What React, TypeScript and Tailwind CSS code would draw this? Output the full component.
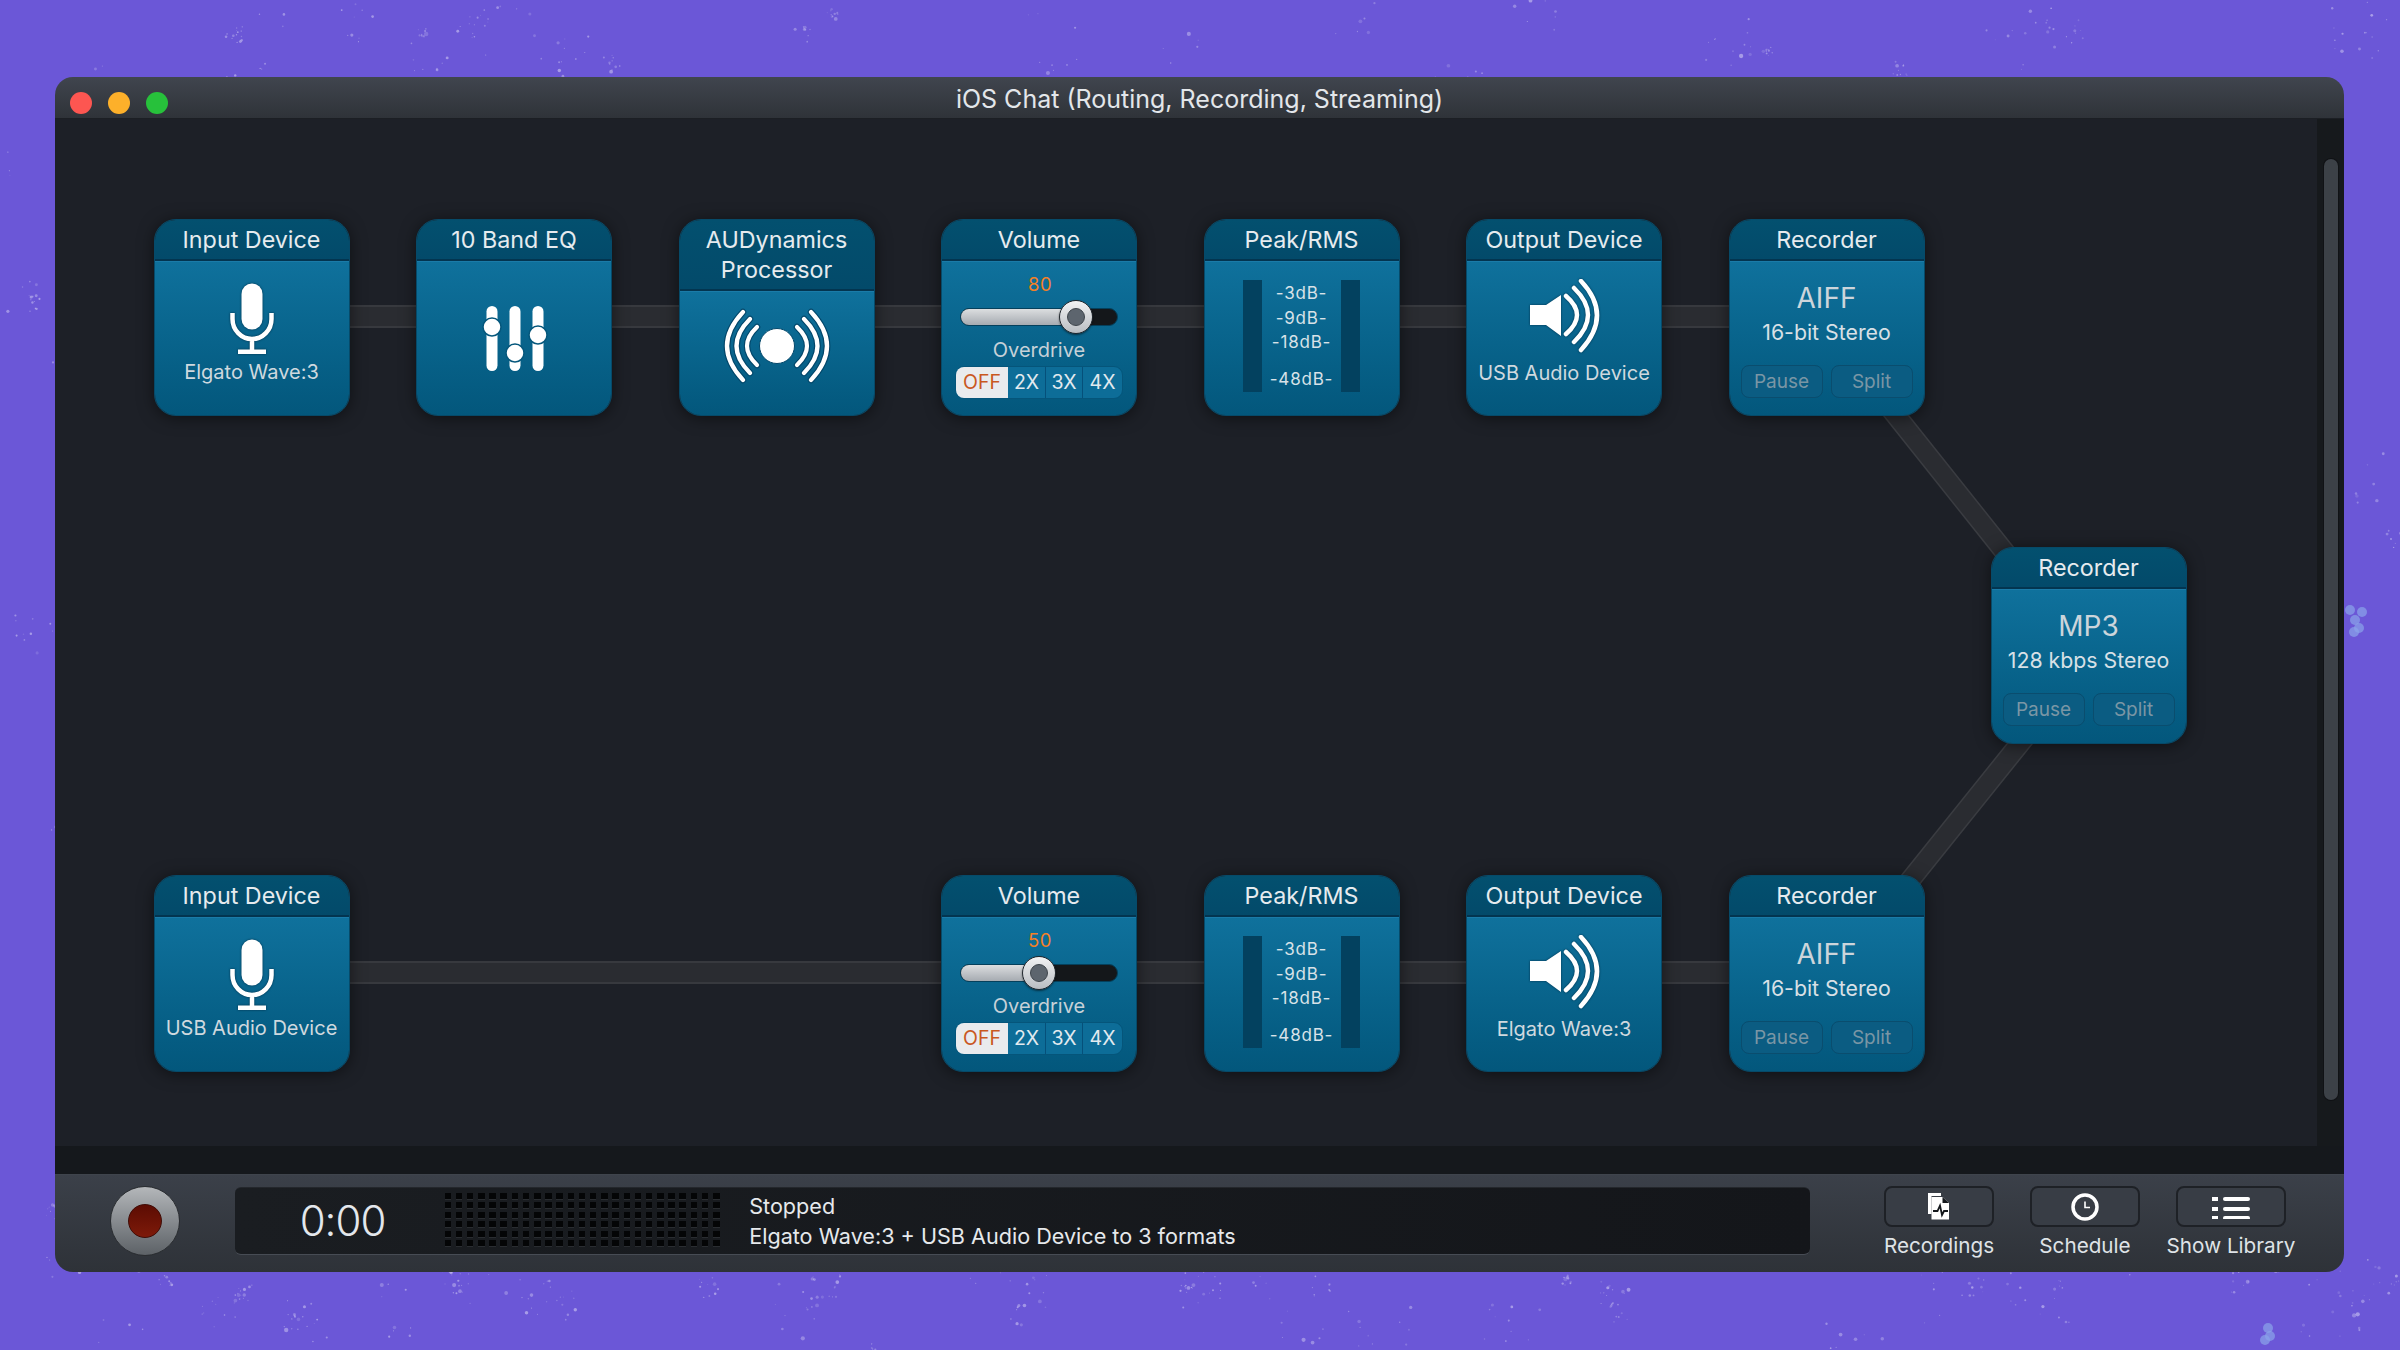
import type { ReactNode } from "react";

// backdrop speckle, seeded so every render gives the same picture
function makeSpeckle(clusters: number) {
  let seed = 48271;
  const next = () => {
    seed = (seed * 16807) % 2147483647;
    return seed / 2147483647;
  };
  const dots = [];
  for (let c = 0; c < clusters; c++) {
    const cx = next() * 2400;
    const cy = next() * 1350;
    const spread = 8 + next() * 60;
    const n = 2 + Math.floor(next() * 14);
    for (let i = 0; i < n; i++) {
      dots.push({
        x: cx + (next() - 0.5) * spread,
        y: cy + (next() - 0.5) * spread,
        r: 0.5 + next() * next() * 1.8,
        o: 0.12 + next() * 0.3,
      });
    }
  }
  return dots;
}

const speckle = makeSpeckle(520);

// the two pale blue blots at the right edge
const blots = [
  { x: 2355, y: 620 },
  { x: 2350, y: 610 },
  { x: 2359, y: 628 },
  { x: 2354, y: 632 },
  { x: 2362, y: 612 },
  { x: 2268, y: 1328 },
  { x: 2270, y: 1336 },
  { x: 2265, y: 1340 },
];

function Backdrop() {
  return (
    <svg className="absolute inset-0" width={2400} height={1350} viewBox="0 0 2400 1350">
      {speckle.map((d, i) => (
        <circle key={i} cx={d.x} cy={d.y} r={d.r} fill="#ffffff" opacity={d.o} />
      ))}
      {blots.map((b, i) => (
        <circle key={i} cx={b.x} cy={b.y} r={5} fill="#8aa4ea" opacity={0.7} />
      ))}
    </svg>
  );
}

function Node({ title, tall, children }: { title: ReactNode; tall?: boolean; children: ReactNode }) {
  return (
    <div className="relative z-10 flex h-[197px] w-[196px] shrink-0 flex-col overflow-hidden rounded-[22px] border border-[#064a69] shadow-[0_2px_16px_rgba(0,0,0,0.5)]">
      <div
        className={`flex shrink-0 items-center justify-center border-b-2 border-[#033550] bg-gradient-to-b from-[#03506f] to-[#034a6a] text-center text-[23.3px] leading-[30px] text-[#e6ebef] ${
          tall ? "h-[71px]" : "h-[41px]"
        }`}
      >
        <div>{title}</div>
      </div>
      <div className="flex flex-1 flex-col items-center border-t border-[#1a7ba8] bg-gradient-to-b from-[#0f719c] to-[#03577c]">{children}</div>
    </div>
  );
}

function Wire({ width }: { width: string }) {
  return <div className={`mt-[86px] h-[23px] shrink-0 border-y-2 border-[#37393e] bg-[#2a2c31] ${width}`} />;
}

function MicIcon() {
  return (
    <svg width={44} height={72} viewBox="0 0 44 72" className="drop-shadow-[0_0_1px_#02304a]">
      <rect x={11.5} y={0.5} width={21} height={46} rx={10.5} fill="#fff" />
      <path d="M2.5 30V36A19.5 20 0 0 0 41.5 36V30M22 56V68" fill="none" stroke="#fff" strokeWidth={4.5} />
      <rect x={8} y={66.5} width={28} height={4.5} fill="#fff" />
    </svg>
  );
}

function InputDevice({ name }: { name: string }) {
  return (
    <Node title="Input Device">
      <div className="mt-[21px]">
        <MicIcon />
      </div>
      <div className="mt-[5px] text-[20px] leading-[24px] whitespace-nowrap text-[#cfd9df]">{name}</div>
    </Node>
  );
}

function EqNode() {
  return (
    <Node title="10 Band EQ">
      <div className="flex flex-1 items-center pl-[2px]">
        <svg width={66} height={66} viewBox="0 0 66 66">
          {[
            { x: 10, y: 21 },
            { x: 33, y: 47 },
            { x: 56, y: 29 },
          ].map((b) => (
            <g key={b.x}>
              <rect x={b.x - 5.5} y={0} width={11} height={65} rx={5.5} fill="#fff" />
              <circle cx={b.x} cy={b.y} r={9} fill="#fff" stroke="#05577c" strokeWidth={1.5} />
            </g>
          ))}
        </svg>
      </div>
    </Node>
  );
}

function DynamicsNode() {
  const arcs = ["M-20-19Q-40 0-20 19", "M-27-27Q-54 0-27 27", "M-34-34Q-66 0-34 34", "M20-19Q40 0 20 19", "M27-27Q54 0 27 27", "M34-34Q66 0 34 34"];
  return (
    <Node
      tall
      title={
        <>
          AUDynamics
          <br />
          Processor
        </>
      }
    >
      <div className="mt-[16px]">
        <svg width={112} height={76} viewBox="-56 -38 112 76">
          {arcs.map((d) => (
            <path key={d} d={d} fill="none" stroke="#03476a" strokeWidth={6.5} strokeLinecap="round" />
          ))}
          {arcs.map((d) => (
            <path key={d} d={d} fill="none" stroke="#fff" strokeWidth={4.2} strokeLinecap="round" />
          ))}
          <circle r={17.5} fill="#fff" stroke="#03476a" strokeWidth={1} />
        </svg>
      </div>
    </Node>
  );
}

function VolumeNode({ value }: { value: number }) {
  const knob = 16.3 + value * 1.233;
  return (
    <Node title="Volume">
      <div className="mt-[11px] pl-[2px] text-[18.5px] leading-[22px] tracking-[0.5px] text-[#f58026]">{value}</div>
      <div className="relative mt-[13px] h-[18px] w-[158px] overflow-visible rounded-full border border-[#04405c] bg-[#14171a]">
        <div
          className="h-full rounded-l-full bg-gradient-to-b from-[#dcdee0] to-[#a6abb1]"
          style={{ width: knob }}
        />
        <div
          className="absolute top-[-9px] flex h-[34px] w-[34px] -translate-x-1/2 items-center justify-center rounded-full border border-[#20262c] bg-gradient-to-b from-[#f2f3f4] to-[#b9bdc2] shadow-[0_1px_2px_rgba(0,0,0,0.5)]"
          style={{ left: knob }}
        >
          <div className="h-[18px] w-[18px] rounded-full border border-[#3e454c] bg-[#5d656e]" />
        </div>
      </div>
      <div className="mt-[12px] text-[20px] leading-[24px] text-[#c6d1d8]">Overdrive</div>
      <div className="mt-[4px] flex h-[33px] w-[168px] overflow-hidden rounded-[9px] border border-[#05557a] bg-[#0d6d98] text-[19.5px] leading-[31px] text-[#e2eaef]">
        <div className="w-[52px] bg-[#e9ebed] text-center text-[#c9581f]">OFF</div>
        <div className="w-[38px] border-r border-[#05507a] text-center">2X</div>
        <div className="w-[37px] border-r border-[#05507a] text-center">3X</div>
        <div className="flex-1 text-center">4X</div>
      </div>
    </Node>
  );
}

function PeakNode() {
  return (
    <Node title="Peak/RMS">
      <div className="mt-[18px] flex h-[112px]">
        <div className="w-[19px] bg-[#03415f]" />
        <div className="flex w-[78.5px] flex-col items-center pt-[3px] text-[17px] leading-[20px] tracking-[0.8px] text-[#d8e2e8]">
          <div>-3dB-</div>
          <div className="mt-[5px]">-9dB-</div>
          <div className="mt-[4px]">-18dB-</div>
          <div className="mt-[17px]">-48dB-</div>
        </div>
        <div className="w-[19px] bg-[#03415f]" />
      </div>
    </Node>
  );
}

function OutputDevice({ name }: { name: string }) {
  return (
    <Node title="Output Device">
      <div className="mt-[17px] pl-[2px]">
        <svg width={70} height={74} viewBox="0 0 70 74" className="drop-shadow-[0_0_1px_#02304a]">
          <path d="M0 26H16L31 16V57L16 46H0Z" fill="#fff" />
          <path d="M36 17Q58 36 36 55M44 9Q72 36 44 63M51 2Q83 36 51 71" fill="none" stroke="#fff" strokeWidth={4.5} strokeLinecap="round" />
        </svg>
      </div>
      <div className="mt-[8px] text-[20px] leading-[24px] whitespace-nowrap text-[#cfd9df]">{name}</div>
    </Node>
  );
}

function RecorderNode({ format, detail }: { format: string; detail: string }) {
  return (
    <Node title="Recorder">
      <div className="mt-[19px] text-[28px] leading-[34px] text-[#ccd5db]">{format}</div>
      <div className="mt-[5px] text-[21.3px] leading-[24px] whitespace-nowrap text-[#d8e0e6]">{detail}</div>
      <div className="mt-[21px] flex gap-[8px]">
        <div className="h-[33px] w-[82px] rounded-[8px] border border-[#0a4d6e] bg-[#0b5c82] text-center text-[19px] leading-[31px] text-[#7a96a5]">Pause</div>
        <div className="h-[33px] w-[82px] rounded-[8px] border border-[#0a4d6e] bg-[#0b5c82] text-center text-[19px] leading-[31px] text-[#7a96a5]">Split</div>
      </div>
    </Node>
  );
}

function DiagonalWires() {
  const edges = [
    { fill: "1813,277 1838,277 1979,454 1954,454", a: "M1813 277L1954 454", b: "M1838 277L1979 454" },
    { fill: "1968,605 1993,605 1855,777 1830,777", a: "M1968 605L1830 777", b: "M1993 605L1855 777" },
  ];
  return (
    <svg className="absolute inset-0" width={2261} height={1027} viewBox="0 0 2261 1027">
      {edges.map((e) => (
        <g key={e.fill}>
          <polygon points={e.fill} fill="#2a2c31" />
          <path d={e.a} stroke="#3a3c41" strokeWidth={1.5} />
          <path d={e.b} stroke="#3a3c41" strokeWidth={1.5} />
        </g>
      ))}
    </svg>
  );
}

function RecordingsIcon() {
  return (
    <svg width={24} height={29} viewBox="0 0 24 29">
      <path d="M1 1H14V4H4.5V22H1Z" fill="#fff" />
      <path d="M4.5 5H15.5L22 11V27.5H4.5Z" fill="#fff" />
      <path d="M15.5 5L22 11H15.5Z" fill="#15181c" />
      <path d="M6 19H10.5L13 13.5L15 23L17 19H21" fill="none" stroke="#15181c" strokeWidth={1.8} />
    </svg>
  );
}

function ClockIcon() {
  return (
    <svg width={30} height={30} viewBox="0 0 30 30">
      <circle cx={15} cy={15} r={12} fill="none" stroke="#fff" strokeWidth={3.5} />
      <path d="M15 9.5V15.5H20" fill="none" stroke="#fff" strokeWidth={1.6} />
    </svg>
  );
}

function ListIcon() {
  return (
    <svg width={38} height={24} viewBox="0 0 38 24">
      {[2, 12, 21].map((y) => (
        <g key={y} fill="#fff">
          <rect x={0} y={y} width={6} height={4} />
          <rect x={11} y={y} width={27} height={4} rx={2} />
        </g>
      ))}
    </svg>
  );
}

function ToolButton({ label, children }: { label: string; children: ReactNode }) {
  return (
    <div className="flex w-[110px] flex-col items-center">
      <div className="flex h-[41px] w-[110px] items-center justify-center rounded-[8px] border-2 border-[#1e2126] bg-[#383d45]">{children}</div>
      <div className="mt-[6px] text-[20.7px] leading-[26px] whitespace-nowrap text-[#dfe3e7]">{label}</div>
    </div>
  );
}

export default function App() {
  return (
    <div className="relative h-[1350px] w-[2400px] overflow-hidden bg-[#6b57d7] pt-[77px] pl-[55px] font-['Inter','Noto_Sans',sans-serif] antialiased">
      <Backdrop />
      <div className="relative flex h-[1195px] w-[2289px] flex-col overflow-hidden rounded-[18px]">
        {/* title bar */}
        <div className="grid h-[42px] shrink-0 grid-cols-[1fr_auto_1fr] items-center border-b border-[#1c1f24] bg-gradient-to-b from-[#40454e] to-[#2f3339]">
          <div className="flex gap-[16px] pt-[10px] pl-[15px]">
            <div className="h-[22px] w-[22px] rounded-full bg-[#fd5651]" />
            <div className="h-[22px] w-[22px] rounded-full bg-[#fdb02a]" />
            <div className="h-[22px] w-[22px] rounded-full bg-[#27c13b]" />
          </div>
          <div className="pt-[2px] text-[25px] leading-[30px] text-[#e3e6ea]">iOS Chat (Routing, Recording, Streaming)</div>
          <div />
        </div>

        {/* routing canvas and scroller */}
        <div className="flex h-[1027px] shrink-0">
          <div className="relative flex-1 bg-[#1d2027] pt-[100px] pl-[98.5px]">
            <DiagonalWires />
            <div className="flex items-start">
              <InputDevice name="Elgato Wave:3" />
              <Wire width="w-[66.5px]" />
              <EqNode />
              <Wire width="w-[66.5px]" />
              <DynamicsNode />
              <Wire width="w-[66.5px]" />
              <VolumeNode value={80} />
              <Wire width="w-[66.5px]" />
              <PeakNode />
              <Wire width="w-[66.5px]" />
              <OutputDevice name="USB Audio Device" />
              <Wire width="w-[66.5px]" />
              <RecorderNode format="AIFF" detail="16-bit Stereo" />
            </div>
            <div className="mt-[131px] ml-[1837px]">
              <RecorderNode format="MP3" detail="128 kbps Stereo" />
            </div>
            <div className="mt-[131px] flex items-start">
              <InputDevice name="USB Audio Device" />
              <Wire width="w-[591.5px]" />
              <VolumeNode value={50} />
              <Wire width="w-[66.5px]" />
              <PeakNode />
              <Wire width="w-[66.5px]" />
              <OutputDevice name="Elgato Wave:3" />
              <Wire width="w-[66.5px]" />
              <RecorderNode format="AIFF" detail="16-bit Stereo" />
            </div>
          </div>
          <div className="w-[27px] shrink-0 bg-[#16191c] pt-[40px] pl-[7px]">
            <div className="h-[941px] w-[14px] rounded-full bg-[#3c4147] shadow-[0_0_0_1px_#101215]" />
          </div>
        </div>
        <div className="h-[28px] shrink-0 bg-[#15181c]" />

        {/* bottom toolbar */}
        <div className="flex h-[98px] shrink-0 items-start border-t border-[#3f444c] bg-gradient-to-b from-[#3b4049] to-[#2e3238] pt-[11px] pl-[55px]">
          <div className="flex h-[70px] w-[70px] items-center justify-center rounded-full border border-[#2a2d31] bg-gradient-to-b from-[#b4b7ba] to-[#5d6267]">
            <div className="h-[34px] w-[34px] rounded-full border border-[#3f0b05] bg-gradient-to-b from-[#5c0c03] to-[#7e1a0a]" />
          </div>
          <div className="mt-[1px] ml-[55px] flex h-[68px] w-[1575px] items-center rounded-[6px] border-t border-b border-t-[#24272c] border-b-[#474c54] bg-gradient-to-r from-[#1a1d21] to-[#14161a]">
            <div className="w-[209.5px] pl-[5.5px] text-center text-[42px] leading-[52px] font-light tracking-[-1px] text-[#e3e7ec]">0:00</div>
            <div className="grid grid-cols-[repeat(25,11.2px)] grid-rows-[repeat(6,9.5px)]">
              {Array.from({ length: 150 }).map((_, i) => (
                <div key={i} className="h-[6px] w-[6.5px] bg-[#040506] shadow-[0_1px_0_#2a2d31]" />
              ))}
            </div>
            <div className="ml-[25px] text-[21.6px] leading-[30px] whitespace-nowrap text-[#e6e9ec]">
              <div>Stopped</div>
              <div>Elgato Wave:3 + USB Audio Device to 3 formats</div>
            </div>
          </div>
          <div className="ml-[74px] flex gap-[36px]">
            <ToolButton label="Recordings">
              <RecordingsIcon />
            </ToolButton>
            <ToolButton label="Schedule">
              <ClockIcon />
            </ToolButton>
            <ToolButton label="Show Library">
              <ListIcon />
            </ToolButton>
          </div>
        </div>
      </div>
    </div>
  );
}
